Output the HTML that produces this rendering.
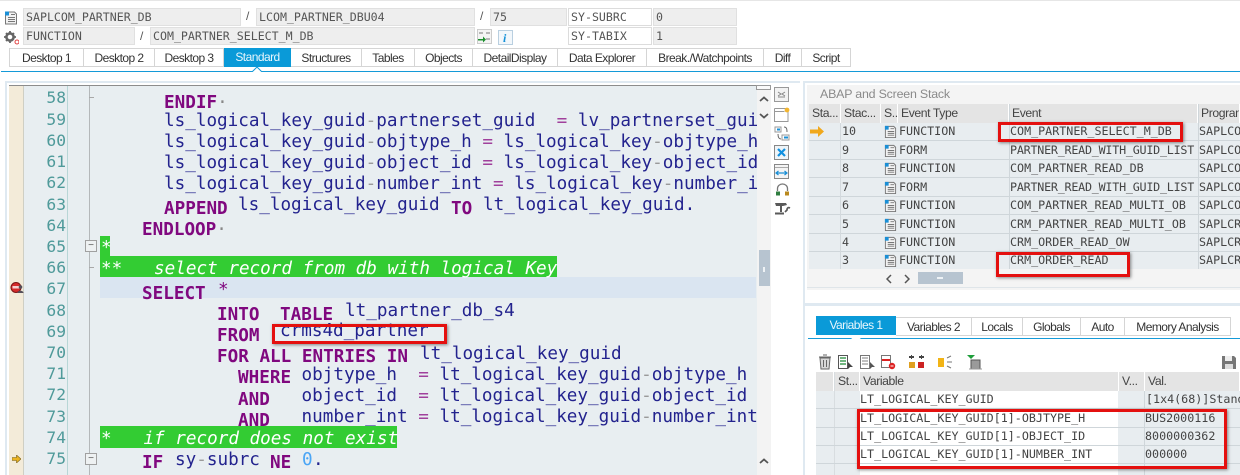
<!DOCTYPE html>
<html><head><meta charset="utf-8"><style>
html,body{margin:0;padding:0;background:#fff}
#r{position:relative;width:1240px;height:475px;overflow:hidden;background:#fff;font-family:"Liberation Sans",sans-serif;filter:blur(.35px)}
.a,.f,.t,.c,.n,.hd,.cell,.m{position:absolute;white-space:pre}
.f{background:#eeeeee;border:1px solid #e0e0e0;box-sizing:border-box;height:18px;font:11.6px/17px "DejaVu Sans Mono",monospace;color:#555;padding-left:2px}
.f.w{background:#fff;border:1px solid #dcdcdc}
.s{position:absolute;font:12px "Liberation Sans",sans-serif;color:#555}
.t{top:48px;height:19px;box-sizing:border-box;background:#fff;border:1px solid #d5d5d5;border-left:0;font:12px/18px "Liberation Sans",sans-serif;letter-spacing:-.55px;color:#333;text-align:center}
.t.on{background:#0a9ad8;color:#e8f6fc;border:0}
#code{position:absolute;left:100px;top:86px;width:657px;height:389px;overflow:hidden}
.c{font:17.64px/21.2px "DejaVu Sans Mono",monospace;color:#23238e;margin-top:2.5px}
.c.k{font-weight:bold;color:#80087f}
.c i.o{font-style:normal;color:#9a9a9a}
.c i.e{font-style:normal;color:#a0409c}
.g{position:absolute;background:#33cc33;height:21.5px;left:0}
.cm{color:#fff;font-style:italic}
.n{left:45px;width:21px;text-align:right;font:16.3px/21.2px "DejaVu Sans Mono",monospace;color:#4f9a9a}
.rb{position:absolute;box-sizing:border-box;border:3px solid #e4100f;box-shadow:1px 1px 3px rgba(60,60,60,.6);z-index:5}
.m{font:11.7px/18px "DejaVu Sans Mono",monospace;color:#444}
.hd{background:#e4e4e4;border-right:1px solid #fff;box-sizing:border-box;font:12.2px/18px "Liberation Sans",sans-serif;letter-spacing:-.4px;color:#444;padding-left:3px;height:19px;overflow:hidden}
.rw{position:absolute;height:1px;background:#cfd6da}
.ic{position:absolute}
</style></head><body><div id="r">
<svg width="0" height="0" style="position:absolute"><defs>
<symbol id="doc" viewBox="0 0 14 14"><path d="M1.5 1.5h9l2 2v10h-11z" fill="#f2f2f2" stroke="#777"/><path d="M1 1h4v4H1z" fill="#1a8fd6"/><path d="M4 7h7M4 9h7M4 11h7M7 4h4" stroke="#777" stroke-width="1"/></symbol>
</defs></svg>
<div class="a" style="left:0;top:0;width:1240px;height:1px;background:#e6e6e6"></div>

<svg class="ic" style="left:4px;top:10px" width="14" height="15"><use href="#doc"/></svg>
<svg class="ic" style="left:3px;top:30px" width="16" height="15" viewBox="0 0 16 15"><circle cx="7" cy="7" r="3.6" fill="none" stroke="#666" stroke-width="2.6"/><path d="M7 1v2M7 11v2M1 7h2M11 7h2M3 3l1.4 1.4M11 3L9.600 4.400M3 11l1.400-1.400" stroke="#666" stroke-width="1.800"/><circle cx="14" cy="12" r="2" fill="#fff" stroke="#e04040"/></svg>
<div class="f" style="left:23px;top:8px;width:218px">SAPLCOM_PARTNER_DB</div>
<div class="s" style="left:246px;top:9px">/</div>
<div class="f" style="left:256px;top:8px;width:219px">LCOM_PARTNER_DBU04</div>
<div class="s" style="left:480px;top:9px">/</div>
<div class="f" style="left:490px;top:8px;width:77px">75</div>
<div class="f w" style="left:568px;top:8px;width:84px">SY-SUBRC</div>
<div class="f" style="left:653px;top:8px;width:84px">0</div>
<div class="f" style="left:23px;top:27px;width:112px">FUNCTION</div>
<div class="s" style="left:140px;top:29px">/</div>
<div class="f" style="left:150px;top:27px;width:325px">COM_PARTNER_SELECT_M_DB</div>
<svg class="ic" style="left:477px;top:29px" width="15" height="15" viewBox="0 0 15 15"><rect x=".5" y=".5" width="14" height="14" fill="#f4f4f4" stroke="#ccc"/><path d="M2 4h4M9 4h4M9 10h4" stroke="#777"/><path d="M1 10h5V7.500l3 3-3 3V11.500H1z" fill="#1d8f2e"/></svg>
<svg class="ic" style="left:498px;top:30px" width="15" height="15" viewBox="0 0 15 15"><rect x=".5" y=".5" width="14" height="14" fill="#f2f7fb" stroke="#b9cfe0"/><text x="5" y="12" font-family="Liberation Serif" font-style="italic" font-weight="bold" font-size="12" fill="#1491d8">i</text></svg>
<div class="f w" style="left:568px;top:27px;width:84px">SY-TABIX</div>
<div class="f" style="left:653px;top:27px;width:84px">1</div>

<div class="t" style="left:9px;width:75px;border-left:1px solid #d5d5d5">Desktop 1</div>
<div class="t" style="left:84px;width:71px">Desktop 2</div>
<div class="t" style="left:155px;width:69px">Desktop 3</div>
<div class="t on" style="left:224px;width:67px">Standard</div>
<div class="t" style="left:291px;width:71px">Structures</div>
<div class="t" style="left:362px;width:53px">Tables</div>
<div class="t" style="left:415px;width:58px">Objects</div>
<div class="t" style="left:473px;width:85px">DetailDisplay</div>
<div class="t" style="left:558px;width:89px">Data Explorer</div>
<div class="t" style="left:647px;width:117px">Break./Watchpoints</div>
<div class="t" style="left:764px;width:38px">Diff</div>
<div class="t" style="left:802px;width:49px">Script</div>
<div class="a" style="left:1px;top:71px;width:1239px;height:1px;background:#149ad8"></div>
<svg class="ic" style="left:252px;top:67px" width="10" height="5"><path d="M0 5L5 0l5 5z" fill="#fff"/><path d="M0 5L5 0l5 5" fill="none" stroke="#149ad8"/></svg>

<!-- editor frame -->
<div class="a" style="left:5px;top:81px;width:794px;height:394px;background:#fff"></div>
<div class="a" style="left:5px;top:81px;width:795px;height:2px;background:#dfe9f1"></div>
<div class="a" style="left:5px;top:81px;width:2px;height:394px;background:#dfe9f1"></div>
<div class="a" style="left:9px;top:85px;width:761px;height:390px;background:#e8eef1;border-top:1px solid #8c8c8c;box-sizing:border-box"></div>
<div class="a" style="left:9px;top:86px;width:15px;height:389px;background:#f3ebd9"></div>
<div class="a" style="left:23px;top:86px;width:1px;height:389px;background:#cfcfc4"></div>
<div class="a" style="left:67px;top:86px;width:1px;height:389px;background:#b8d6d6"></div>
<div class="a" style="left:89px;top:86px;width:1px;height:389px;background:#b4b8ba"></div>
<div class="a" style="left:89px;top:97px;width:5px;height:1px;background:#a8a8a8"></div>
<div class="a" style="left:89px;top:267px;width:5px;height:1px;background:#a8a8a8"></div>
<div class="a" style="left:85px;top:240px;width:10px;height:10px;background:#eef1f2;border:1px solid #a0a0a0;font:10px/9px 'Liberation Sans';text-align:center;color:#555">−</div>
<div class="a" style="left:85px;top:453px;width:10px;height:10px;background:#eef1f2;border:1px solid #a0a0a0;font:10px/9px 'Liberation Sans';text-align:center;color:#555">−</div>

<div class="n" style="top:87px">58</div><div class="n" style="top:108.700px">59</div><div class="n" style="top:129.900px">60</div><div class="n" style="top:151.100px">61</div><div class="n" style="top:172.300px">62</div><div class="n" style="top:193.500px">63</div><div class="n" style="top:214.700px">64</div><div class="n" style="top:235.900px">65</div><div class="n" style="top:257.100px">66</div><div class="n" style="top:278.300px">67</div><div class="n" style="top:299.500px">68</div><div class="n" style="top:320.700px">69</div><div class="n" style="top:341.900px">70</div><div class="n" style="top:363.100px">71</div><div class="n" style="top:384.300px">72</div><div class="n" style="top:405.500px">73</div><div class="n" style="top:426.700px">74</div><div class="n" style="top:447.900px">75</div>

<svg class="ic" style="left:10px;top:282px" width="14" height="12" viewBox="0 0 14 12"><circle cx="6" cy="5.500" r="5" fill="#d52b2b" stroke="#7a1616"/><rect x="2.500" y="4" width="7" height="2.500" fill="#f6d0d0"/><circle cx="10.500" cy="5" r="1.800" fill="#55505a"/><path d="M7.500 11c0-3 6-3 6 0z" fill="#55505a"/></svg>
<svg class="ic" style="left:12px;top:455px" width="9" height="8" viewBox="0 0 9 8"><path d="M0 2.500h4.500V0L9 4 4.500 8V5.500H0z" fill="#eab322" stroke="#77601a" stroke-width=".6"/></svg>

<div id="code">
<div class="g" style="top:149.600px;width:10px"></div>
<div class="g" style="top:170px;width:457px"></div>
<div class="a" style="top:191px;left:0;width:656px;height:21.200px;background:#dae5f1"></div>

<div class="c k" style="left:64px;top:4.500px">ENDIF<i style="font-style:normal;font-weight:normal;color:#888">·</i></div>
<div class="c" style="left:64px;top:22px">ls_logical_key_guid<i class="o">-</i>partnerset_guid  <i class="e">=</i> lv_partnerset_gui</div>
<div class="c" style="left:64px;top:43.200px">ls_logical_key_guid<i class="o">-</i>objtype_h <i class="e">=</i> ls_logical_key<i class="o">-</i>objtype_h</div>
<div class="c" style="left:64px;top:64.400px">ls_logical_key_guid<i class="o">-</i>object_id <i class="e">=</i> ls_logical_key<i class="o">-</i>object_id</div>
<div class="c" style="left:64px;top:85.600px">ls_logical_key_guid<i class="o">-</i>number_int <i class="e">=</i> ls_logical_key<i class="o">-</i>number_i</div>
<div class="c k" style="left:64px;top:110.400px">APPEND</div><div class="c" style="left:138px;top:106.800px">ls_logical_key_guid</div><div class="c k" style="left:351px;top:110.400px">TO</div><div class="c" style="left:383px;top:106.800px">lt_logical_key_guid.</div>
<div class="c k" style="left:42px;top:131.600px">ENDLOOP<i style="font-style:normal;font-weight:normal;color:#888">·</i></div>
<div class="c cm" style="left:1px;top:149.600px;font-style:italic">*</div>
<div class="c cm" style="left:1px;top:170px">**   select record from db with logical Key</div>
<div class="c k" style="left:42px;top:195px">SELECT</div><div class="c" style="left:118px;top:191px;color:#80087f">*</div>
<div class="c k" style="left:117px;top:216px">INTO</div><div class="c k" style="left:180px;top:216px">TABLE</div><div class="c" style="left:245px;top:212.500px">lt_partner_db_s4</div>
<div class="c k" style="left:117px;top:237.400px">FROM</div><div class="c" style="left:180px;top:232.700px">crms4d_partner</div>
<div class="c k" style="left:117px;top:258.600px">FOR ALL ENTRIES IN</div><div class="c" style="left:320px;top:255px">lt_logical_key_guid</div>
<div class="c k" style="left:138px;top:279.800px">WHERE</div><div class="c" style="left:201.500px;top:276px">objtype_h  <i class="e">=</i> lt_logical_key_guid<i class="o">-</i>objtype_h</div>
<div class="c k" style="left:138px;top:301px">AND</div><div class="c" style="left:201.500px;top:297.300px">object_id  <i class="e">=</i> lt_logical_key_guid<i class="o">-</i>object_id</div>
<div class="c k" style="left:138px;top:322.200px">AND</div><div class="c" style="left:201.500px;top:318.500px">number_int <i class="e">=</i> lt_logical_key_guid<i class="o">-</i>number_int</div>
<div class="g" style="top:340px;width:297px"></div>
<div class="c cm" style="left:1px;top:340px">*   if record does not exist</div>
<div class="c k" style="left:42px;top:364.500px">IF</div><div class="c" style="left:75px;top:361px">sy<i class="o">-</i>subrc</div><div class="c k" style="left:170px;top:364.500px">NE</div><div class="c" style="left:202px;top:361px;color:#4aa5f5">0</div><div class="c" style="left:213px;top:361px">.</div>
</div>

<!-- scrollbar -->
<div class="a" style="left:757px;top:86px;width:14px;height:389px;background:#f3f3f3"></div>
<div class="a" style="left:756px;top:85px;width:15px;height:5px;box-sizing:border-box;border:1px solid #999;background:#fafafa"></div>
<div class="a" style="left:758.500px;top:250px;width:11px;height:36px;background:#b7c4d0"></div>
<div class="a" style="left:763px;top:267px;width:2px;height:5px;background:#eef2f5"></div>
<svg class="ic" style="left:759px;top:96px" width="10" height="6"><path d="M1 5l4-3.500L9 5" fill="none" stroke="#555" stroke-width="1.800"/></svg>
<svg class="ic" style="left:759px;top:113px" width="10" height="6"><path d="M1 1l4 3.500L9 1" fill="none" stroke="#555" stroke-width="1.800"/></svg>
<svg class="ic" style="left:759px;top:458px" width="10" height="6"><path d="M1 5l4-3.500L9 5" fill="none" stroke="#555" stroke-width="1.800"/></svg>

<!-- side icons -->
<svg class="ic" style="left:774px;top:87px" width="17" height="17" viewBox="0 0 17 17"><rect x=".5" y=".5" width="14" height="14" fill="#f2f2f2" stroke="#999"/><path d="M4 5l3 2-3 2M11 5L8 7l3 2M4 10h7" fill="none" stroke="#888"/></svg>
<svg class="ic" style="left:774px;top:107px" width="17" height="16" viewBox="0 0 17 16"><path d="M.5 1.500h11M.5 1.500v13h13.500V5" fill="#fff" stroke="#999"/><path d="M.5 4.500h10" stroke="#999"/><circle cx="13" cy="3" r="2.400" fill="#f2b530"/></svg>
<svg class="ic" style="left:774px;top:126px" width="16" height="16" viewBox="0 0 16 16"><rect x="1" y="1" width="6" height="5" fill="#fff" stroke="#999"/><rect x="3" y="2.500" width="3" height="2" fill="#1a8fd6"/><rect x="8" y="9" width="7" height="5" fill="#fff" stroke="#999"/><rect x="10" y="10.500" width="4" height="2" fill="#1a8fd6"/><path d="M10 1c3 0 3 3 3 5M4 8c0 3 1 5 3 5" fill="none" stroke="#666"/></svg>
<svg class="ic" style="left:774px;top:145px" width="16" height="16" viewBox="0 0 16 16"><rect x=".5" y=".5" width="14" height="14" fill="#eef4f8" stroke="#888"/><path d="M4 4l7 7M11 4l-7 7" stroke="#0f90e0" stroke-width="2.200"/></svg>
<svg class="ic" style="left:774px;top:164px" width="16" height="16" viewBox="0 0 16 16"><rect x=".5" y=".5" width="14" height="14" fill="#f4f4f4" stroke="#888"/><path d="M1 3.500h13" stroke="#aaa"/><path d="M2 9h11M4.500 7L2 9l2.500 2M10.500 7L13 9l-2.500 2" fill="none" stroke="#1a8fd6" stroke-width="1.200"/></svg>
<svg class="ic" style="left:775px;top:183px" width="15" height="14" viewBox="0 0 15 14"><path d="M2.500 8V5.500a5 4.500 0 0 1 10 0V8" fill="none" stroke="#777" stroke-width="1.300"/><rect x="1" y="8.500" width="4" height="4" fill="#2f7d3f"/><rect x="10" y="8.500" width="4" height="4" fill="#b9891f"/></svg>
<svg class="ic" style="left:775px;top:202px" width="16" height="14" viewBox="0 0 16 14"><path d="M0 1h11l1 2-4 1H7v6H5V4H1z" fill="#5a5a5a"/><path d="M0 11.500h9" stroke="#5a5a5a" stroke-width="2"/><path d="M15 6c-2-1-3 0-3 2l-2 2" fill="none" stroke="#5a5a5a" stroke-width="1.700"/></svg>

<!-- stack panel -->
<div class="a" style="left:803px;top:82px;width:437px;height:393px;background:#fff"></div>
<div class="a" style="left:803px;top:82px;width:2px;height:393px;background:#dfe9f1"></div>
<div class="a" style="left:803px;top:81px;width:437px;height:2px;background:#dfe9f1"></div>
<div class="a" style="left:807px;top:85px;width:433px;height:205px;background:#f4f4f4"></div>
<div class="s" style="left:820px;top:87px;font-size:12.400px;line-height:15px;color:#8a8a8a;letter-spacing:-.2px">ABAP and Screen Stack</div>

<div class="hd" style="left:809px;top:104px;width:32px">Sta...</div>
<div class="hd" style="left:841px;top:104px;width:40px">Stac...</div>
<div class="hd" style="left:881px;top:104px;width:17px">S..</div>
<div class="hd" style="left:898px;top:104px;width:111px">Event Type</div>
<div class="hd" style="left:1009px;top:104px;width:189px">Event</div>
<div class="hd" style="left:1198px;top:104px;width:42px">Program</div>
<div class="a" style="left:809px;top:123px;width:431px;height:146px;background:#e8edf0"></div>
<div class="rw" style="left:809px;top:140px;width:431px"></div>
<div class="rw" style="left:809px;top:159px;width:431px"></div>
<div class="rw" style="left:809px;top:177px;width:431px"></div>
<div class="rw" style="left:809px;top:196px;width:431px"></div>
<div class="rw" style="left:809px;top:214px;width:431px"></div>
<div class="rw" style="left:809px;top:233px;width:431px"></div>
<div class="rw" style="left:809px;top:251px;width:431px"></div>
<div class="a" style="left:840px;top:123px;width:1px;height:146px;background:#d3d9dd"></div>
<div class="a" style="left:1009px;top:104px;width:1px;height:165px;background:#cfd6da"></div>
<div class="a" style="left:1198px;top:104px;width:1px;height:165px;background:#cfd6da"></div>
<svg class="ic" style="left:810px;top:126px" width="15" height="11" viewBox="0 0 15 11"><path d="M0 3.500h8V0l6 5.500-6 5.500V7.500H0z" fill="#f0a81c"/></svg>
<div class="m" style="left:842px;top:122px">10</div><div class="m" style="left:842px;top:141px">9</div><div class="m" style="left:842px;top:159px">8</div><div class="m" style="left:842px;top:178px">7</div><div class="m" style="left:842px;top:196px">6</div><div class="m" style="left:842px;top:215px">5</div><div class="m" style="left:842px;top:233px">4</div><div class="m" style="left:842px;top:251px">3</div>
<svg class="ic" style="left:884px;top:125px" width="13" height="13"><use href="#doc"/></svg><svg class="ic" style="left:884px;top:144px" width="13" height="13"><use href="#doc"/></svg><svg class="ic" style="left:884px;top:162px" width="13" height="13"><use href="#doc"/></svg><svg class="ic" style="left:884px;top:181px" width="13" height="13"><use href="#doc"/></svg><svg class="ic" style="left:884px;top:199px" width="13" height="13"><use href="#doc"/></svg><svg class="ic" style="left:884px;top:218px" width="13" height="13"><use href="#doc"/></svg><svg class="ic" style="left:884px;top:236px" width="13" height="13"><use href="#doc"/></svg><svg class="ic" style="left:884px;top:254px" width="13" height="13"><use href="#doc"/></svg>
<div class="m" style="left:899px;top:122px">FUNCTION</div><div class="m" style="left:899px;top:141px">FORM</div><div class="m" style="left:899px;top:159px">FUNCTION</div><div class="m" style="left:899px;top:178px">FORM</div><div class="m" style="left:899px;top:196px">FUNCTION</div><div class="m" style="left:899px;top:215px">FUNCTION</div><div class="m" style="left:899px;top:233px">FUNCTION</div><div class="m" style="left:899px;top:251px">FUNCTION</div>
<div class="m" style="left:1010px;top:122px">COM_PARTNER_SELECT_M_DB</div><div class="m" style="left:1010px;top:141px;letter-spacing:-.22px">PARTNER_READ_WITH_GUID_LIST</div><div class="m" style="left:1010px;top:159px">COM_PARTNER_READ_DB</div><div class="m" style="left:1010px;top:178px;letter-spacing:-.22px">PARTNER_READ_WITH_GUID_LIST</div><div class="m" style="left:1010px;top:196px">COM_PARTNER_READ_MULTI_OB</div><div class="m" style="left:1010px;top:215px">CRM_PARTNER_READ_MULTI_OB</div><div class="m" style="left:1010px;top:233px">CRM_ORDER_READ_OW</div><div class="m" style="left:1010px;top:251px">CRM_ORDER_READ</div>
<div class="m" style="left:1199px;top:122px">SAPLCO</div><div class="m" style="left:1199px;top:141px">SAPLCO</div><div class="m" style="left:1199px;top:159px">SAPLCO</div><div class="m" style="left:1199px;top:178px">SAPLCO</div><div class="m" style="left:1199px;top:196px">SAPLCO</div><div class="m" style="left:1199px;top:215px">SAPLCR</div><div class="m" style="left:1199px;top:233px">SAPLCR</div><div class="m" style="left:1199px;top:251px">SAPLCR</div>
<div class="a" style="left:807px;top:269px;width:433px;height:18px;background:#f4f4f4"></div>
<svg class="ic" style="left:886px;top:274px" width="6" height="10"><path d="M5 1L1 5l4 4" fill="none" stroke="#555" stroke-width="1.500"/></svg>
<svg class="ic" style="left:904px;top:274px" width="6" height="10"><path d="M1 1l4 4-4 4" fill="none" stroke="#555" stroke-width="1.500"/></svg>
<div class="a" style="left:918px;top:272px;width:45px;height:12px;background:#b7c4d0"></div>
<div class="a" style="left:937px;top:277px;width:6px;height:2px;background:#eef2f5"></div>
<div class="a" style="left:807px;top:287px;width:433px;height:1px;background:#dfe5e9"></div>
<div class="a" style="left:803px;top:303px;width:437px;height:3px;background:#dfe9f1"></div>

<!-- variables tabs -->
<div class="t on" style="left:816px;top:316px;width:80px;height:19px">Variables 1</div>
<div class="t" style="left:896px;top:317px;width:76px">Variables 2</div>
<div class="t" style="left:972px;top:317px;width:51px">Locals</div>
<div class="t" style="left:1023px;top:317px;width:58px">Globals</div>
<div class="t" style="left:1081px;top:317px;width:44px">Auto</div>
<div class="t" style="left:1125px;top:317px;width:106px">Memory Analysis</div>
<div class="a" style="left:808px;top:338px;width:432px;height:1px;background:#149ad8"></div>
<svg class="ic" style="left:851px;top:335px" width="10" height="4"><path d="M0 4l5-4 5 4z" fill="#fff"/></svg>

<!-- var toolbar -->
<svg class="ic" style="left:818px;top:354px" width="14" height="16" viewBox="0 0 14 16"><path d="M2 4h10l-1 11H3z" fill="#d8d8d8" stroke="#666"/><path d="M1 3h12M5 1h4M5.500 6v7M8.500 6v7" stroke="#666"/></svg>
<svg class="ic" style="left:838px;top:355px" width="16" height="15" viewBox="0 0 16 15"><rect x=".5" y=".5" width="9" height="13" fill="#fff" stroke="#555"/><path d="M2 3h6M2 6h6M2 9h6" stroke="#1e8a36" stroke-width="1.300"/><path d="M10 7l5 5h-3l-2 2z" fill="#444"/></svg>
<svg class="ic" style="left:860px;top:355px" width="16" height="15" viewBox="0 0 16 15"><rect x=".5" y=".5" width="9" height="13" fill="#fff" stroke="#777"/><path d="M2 3h6M2 6h6M2 9h6" stroke="#999" stroke-width="1.300"/><path d="M10 7l5 5h-3l-2 2z" fill="#555"/></svg>
<svg class="ic" style="left:881px;top:355px" width="15" height="15" viewBox="0 0 15 15"><rect x=".5" y=".5" width="9" height="12" fill="#fff" stroke="#777"/><path d="M1 5h8" stroke="#d22" stroke-width="2"/><circle cx="11" cy="11" r="3.200" fill="#d22"/><path d="M9.500 11h3" stroke="#fff"/></svg>
<svg class="ic" style="left:908px;top:354px" width="17" height="16" viewBox="0 0 17 16"><path d="M1 3h5M11 3h5" stroke="#444" stroke-width="2"/><path d="M3.500 1v4M13.500 1v4" stroke="#444"/><rect x="1" y="8" width="6" height="6" fill="#e0a020"/><rect x="10" y="8" width="6" height="6" fill="#cc2222"/></svg>
<svg class="ic" style="left:937px;top:354px" width="17" height="16" viewBox="0 0 17 16"><rect x="1" y="4" width="6" height="9" fill="#f2b416"/><path d="M10 4l4-2M10 8h5M10 12l4 2" stroke="#777"/></svg>
<svg class="ic" style="left:966px;top:355px" width="17" height="16" viewBox="0 0 17 16"><path d="M1 0h8L5 4z" fill="#1e9e3a"/><rect x="5" y="5" width="9" height="9" fill="#9a9a9a" stroke="#555"/><path d="M3 14h13" stroke="#999"/></svg>
<svg class="ic" style="left:1221px;top:355px" width="16" height="15" viewBox="0 0 16 15"><path d="M1 1h12l2 2v11H1z" fill="#777"/><rect x="4" y="1" width="7" height="5" fill="#eee"/><rect x="4" y="9" width="8" height="5" fill="#ddd"/></svg>

<!-- variables table -->
<div class="hd" style="left:816px;top:372px;width:18px"></div>
<div class="hd" style="left:835px;top:372px;width:25px">St...</div>
<div class="hd" style="left:860px;top:372px;width:259px">Variable</div>
<div class="hd" style="left:1119px;top:372px;width:26px">V...</div>
<div class="hd" style="left:1145px;top:372px;width:95px">Val.</div>
<div class="a" style="left:816px;top:391px;width:424px;height:84px;background:#e8edf0"></div>
<div class="a" style="left:860px;top:391px;width:258px;height:84px;background:#fff"></div>
<div class="a" style="left:834px;top:372px;width:1px;height:103px;background:#d8dde0"></div>
<div class="a" style="left:1144px;top:391px;width:1px;height:84px;background:#cfd6da"></div>
<div class="rw" style="left:816px;top:408px;width:424px"></div>
<div class="rw" style="left:816px;top:427px;width:424px"></div>
<div class="rw" style="left:816px;top:445px;width:424px"></div>
<div class="rw" style="left:816px;top:463px;width:424px"></div>
<div class="m" style="left:860px;top:390px">LT_LOGICAL_KEY_GUID</div>
<div class="m" style="left:860px;top:409px">LT_LOGICAL_KEY_GUID[1]-OBJTYPE_H</div>
<div class="m" style="left:860px;top:427px">LT_LOGICAL_KEY_GUID[1]-OBJECT_ID</div>
<div class="m" style="left:860px;top:445px">LT_LOGICAL_KEY_GUID[1]-NUMBER_INT</div>
<div class="m" style="left:1146px;top:390px">[1x4(68)]Standard</div>
<div class="m" style="left:1145px;top:409px">BUS2000116</div>
<div class="m" style="left:1145px;top:427px">8000000362</div>
<div class="m" style="left:1145px;top:445px">000000</div>

<!-- red boxes -->
<div class="rb" style="left:272px;top:324px;width:175px;height:20px"></div>
<div class="rb" style="left:998px;top:122px;width:185px;height:20px"></div>
<div class="rb" style="left:996px;top:252px;width:134px;height:25px"></div>
<div class="rb" style="left:857px;top:409px;width:370px;height:60px"></div>
</div></body></html>
